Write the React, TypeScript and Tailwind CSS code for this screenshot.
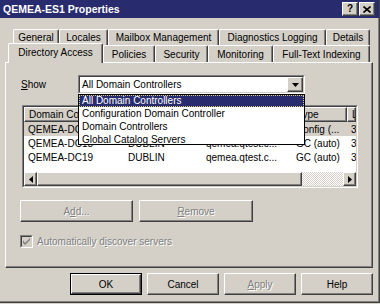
import React from 'react';

const raised =
  'border border-t-white border-l-white border-r-[#404040] border-b-[#404040] shadow-[inset_-1px_-1px_0_#808080]';

const disabledText = 'text-[#808080] [text-shadow:1px_1px_0_#ffffff]';

const Sunken: React.FC<{ className?: string; inner?: string; children?: React.ReactNode }> = ({ className = '', inner = '', children }) => (
  <div className={`border border-t-[#808080] border-l-[#808080] border-r-white border-b-white ${className}`}>
    <div className={`w-full h-full border border-t-[#404040] border-l-[#404040] border-r-[#d4d0c8] border-b-[#d4d0c8] ${inner}`}>
      {children}
    </div>
  </div>
);

const Tab: React.FC<{ w: string; label: string; selected?: boolean }> = ({ w, label, selected }) => (
  <div
    className={`${w} ${
      selected ? 'h-[20px] -mt-[2px] relative z-10 pb-[2px]' : 'h-full'
    } bg-[#d4d0c8] flex items-center justify-center border-l border-t border-r border-l-white border-t-white border-r-[#404040] rounded-t-[2px] shadow-[inset_-1px_0_0_#808080] whitespace-nowrap`}
  >
    {label}
  </div>
);

const Arrow: React.FC<{ dir: 'left' | 'right' | 'down' }> = ({ dir }) => {
  const pts = dir === 'down' ? '0,0 7,0 3.5,4' : dir === 'left' ? '4,0 4,7 0,3.5' : '0,0 0,7 4,3.5';
  const w = dir === 'down' ? 7 : 4;
  const h = dir === 'down' ? 4 : 7;
  return (
    <svg width={w} height={h} viewBox={`0 0 ${w} ${h}`}>
      <polygon points={pts} fill="#000" />
    </svg>
  );
};

const BottomButton: React.FC<{ children: React.ReactNode; def?: boolean; disabled?: boolean }> = ({ children, def, disabled }) =>
  def ? (
    <div className="w-[72px] h-[22px] border border-black">
      <div className={`w-full h-full ${raised} flex items-center justify-center`}>{children}</div>
    </div>
  ) : (
    <div className={`w-[72px] h-[22px] ${raised} flex items-center justify-center ${disabled ? disabledText : ''}`}>
      {children}
    </div>
  );

// cells that sit fully under the open drop-down are left empty
const rows = [
  { dc: 'QEMEA-DC17', site: '', domain: '', type: 'Config (...', n: '3', sel: true },
  { dc: 'QEMEA-DC18', site: 'DUBLIN', domain: 'qemea.qtest.c...', type: 'GC (auto)', n: '3' },
  { dc: 'QEMEA-DC19', site: 'DUBLIN', domain: 'qemea.qtest.c...', type: 'GC (auto)', n: '3' },
];

const cols = ['w-[100px]', 'w-[78px]', 'w-[90px]', 'w-[55px]', 'w-[9px]'];

export default function App() {
  return (
    <div className="w-[380px] h-[304px] bg-[#d4d0c8] font-['Liberation_Sans',Arial,sans-serif] text-[10px] text-black overflow-hidden">
      <div className="w-[380px] h-[303px] flex flex-col border-r border-b border-r-[#404040] border-b-[#404040] shadow-[inset_-1px_-1px_0_#808080]">
        {/* title bar */}
        <div className="h-[18px] w-[379px] bg-[#282c6e] flex items-center pl-[3px] pr-[4px]">
          <span className="flex-1 text-white font-bold text-[10.5px] leading-none">QEMEA-ES1 Properties</span>
          <div className={`w-[16px] h-[14px] bg-[#d4d0c8] ${raised} flex items-center justify-center font-bold text-[10px] leading-none`}>
            ?
          </div>
          <div className={`ml-[1px] w-[16px] h-[14px] bg-[#d4d0c8] ${raised} flex items-center justify-center`}>
            <svg width="8" height="7" viewBox="0 0 8 7">
              <path d="M0.5 0.5 L7.5 6.5 M7.5 0.5 L0.5 6.5" stroke="#000" strokeWidth="1.6" />
            </svg>
          </div>
        </div>

        {/* tabs */}
        <div className="h-[11px]" />
        <div className="flex pl-[13px] h-[16px]">
          <Tab w="w-[46px]" label="General" />
          <Tab w="w-[49px]" label="Locales" />
          <Tab w="w-[111px]" label="Mailbox Management" />
          <Tab w="w-[107px]" label="Diagnostics Logging" />
          <Tab w="w-[44px]" label="Details" />
        </div>
        <div className="flex items-start pl-[8px] h-[17px]">
          <Tab w="w-[95px]" label="Directory Access" selected />
          <Tab w="w-[52px]" label="Policies" />
          <Tab w="w-[53px]" label="Security" />
          <Tab w="w-[65px]" label="Monitoring" />
          <Tab w="w-[97px]" label="Full-Text Indexing" />
        </div>

        {/* panel */}
        <div className="ml-[5px] w-[368px] h-[206px] border border-t-white border-l-white border-r-[#404040] border-b-[#404040] shadow-[inset_-1px_-1px_0_#808080] flex flex-col">
          <div className="mt-[12px] flex items-center">
            <span className="ml-[15px] w-[57px]">
              <u>S</u>how
            </span>
            <div className="relative z-20">
              <Sunken className="w-[227px] h-[19px]" inner="bg-white flex items-center">
                <span className="flex-1 pl-[2px] whitespace-nowrap">All Domain Controllers</span>
                <div className={`w-[16px] h-full bg-[#d4d0c8] ${raised} flex items-center justify-center`}>
                  <Arrow dir="down" />
                </div>
              </Sunken>
              <div className="absolute left-0 top-full w-[227px] h-[51px] bg-white border border-black flex flex-col">
                <div className="h-[12px] bg-[#282c6e] text-white border border-dotted border-[#d8d070] flex items-center pl-[2px] leading-none">
                  All Domain Controllers
                </div>
                <div className="h-[13px] flex items-center pl-[3px]">Configuration Domain Controller</div>
                <div className="h-[13px] flex items-center pl-[3px]">Domain Controllers</div>
                <div className="h-[12px] flex items-center pl-[3px]">Global Catalog Servers</div>
              </div>
            </div>
          </div>

          {/* list view */}
          <Sunken className="mt-[11px] ml-[16px] w-[336px] h-[83px]" inner="bg-white flex flex-col overflow-hidden">
            <div className="flex h-[15px] shrink-0">
              {['Domain Controller', '', '', 'Type', 'L'].map((h, i) => (
                <div
                  key={i}
                  className={`${cols[i]} shrink-0 h-full bg-[#d4d0c8] ${raised} flex items-center pl-[4px] whitespace-nowrap overflow-hidden`}
                >
                  {h}
                </div>
              ))}
            </div>
            {rows.map((r) => (
              <div key={r.dc} className={`flex h-[14px] items-center shrink-0 whitespace-nowrap ${r.sel ? 'bg-[#d4d0c8]' : ''}`}>
                {[r.dc, r.site, r.domain, r.type, r.n].map((c, i) => (
                  <div key={i} className={`${cols[i]} shrink-0 pl-[4px] overflow-hidden`}>
                    {c}
                  </div>
                ))}
              </div>
            ))}
            <div className="flex-1" />
            <div className="flex h-[14px] shrink-0">
              <div className={`w-[13px] h-full bg-[#d4d0c8] ${raised} flex items-center justify-center`}>
                <Arrow dir="left" />
              </div>
              <div className={`w-[265px] h-full bg-[#d4d0c8] ${raised}`} />
              <div className="w-[41px] h-full bg-[repeating-conic-gradient(#ffffff_0%_25%,#d4d0c8_0%_50%)] bg-[length:2px_2px]" />
              <div className={`w-[13px] h-full bg-[#d4d0c8] ${raised} flex items-center justify-center`}>
                <Arrow dir="right" />
              </div>
            </div>
          </Sunken>

          {/* add / remove */}
          <div className="mt-[12px] ml-[14px] flex gap-[6px]">
            <div className={`w-[113px] h-[22px] ${raised} flex items-center justify-center ${disabledText}`}>
              A<u>d</u>d...
            </div>
            <div className={`w-[114px] h-[22px] ${raised} flex items-center justify-center ${disabledText}`}>
              <u>R</u>emove
            </div>
          </div>

          {/* checkbox */}
          <div className="mt-[12px] ml-[14px] flex items-center">
            <Sunken className="w-[13px] h-[13px]" inner="bg-[#d4d0c8] flex items-center justify-center">
              <svg width="7" height="7" viewBox="0 0 7 7">
                <path d="M0 2 L0 5 L2 7 L7 2 L7 0 L2 5 Z" fill="#808080" />
              </svg>
            </Sunken>
            <span className={`ml-[4px] ${disabledText}`}>
              Automatically d<u>i</u>scover servers
            </span>
          </div>
        </div>

        {/* dialog buttons */}
        <div className="mt-[5px] flex pl-[70px] gap-[5px]">
          <BottomButton def>OK</BottomButton>
          <BottomButton>Cancel</BottomButton>
          <BottomButton disabled>
            <u>A</u>pply
          </BottomButton>
          <BottomButton>Help</BottomButton>
        </div>
      </div>
    </div>
  );
}
